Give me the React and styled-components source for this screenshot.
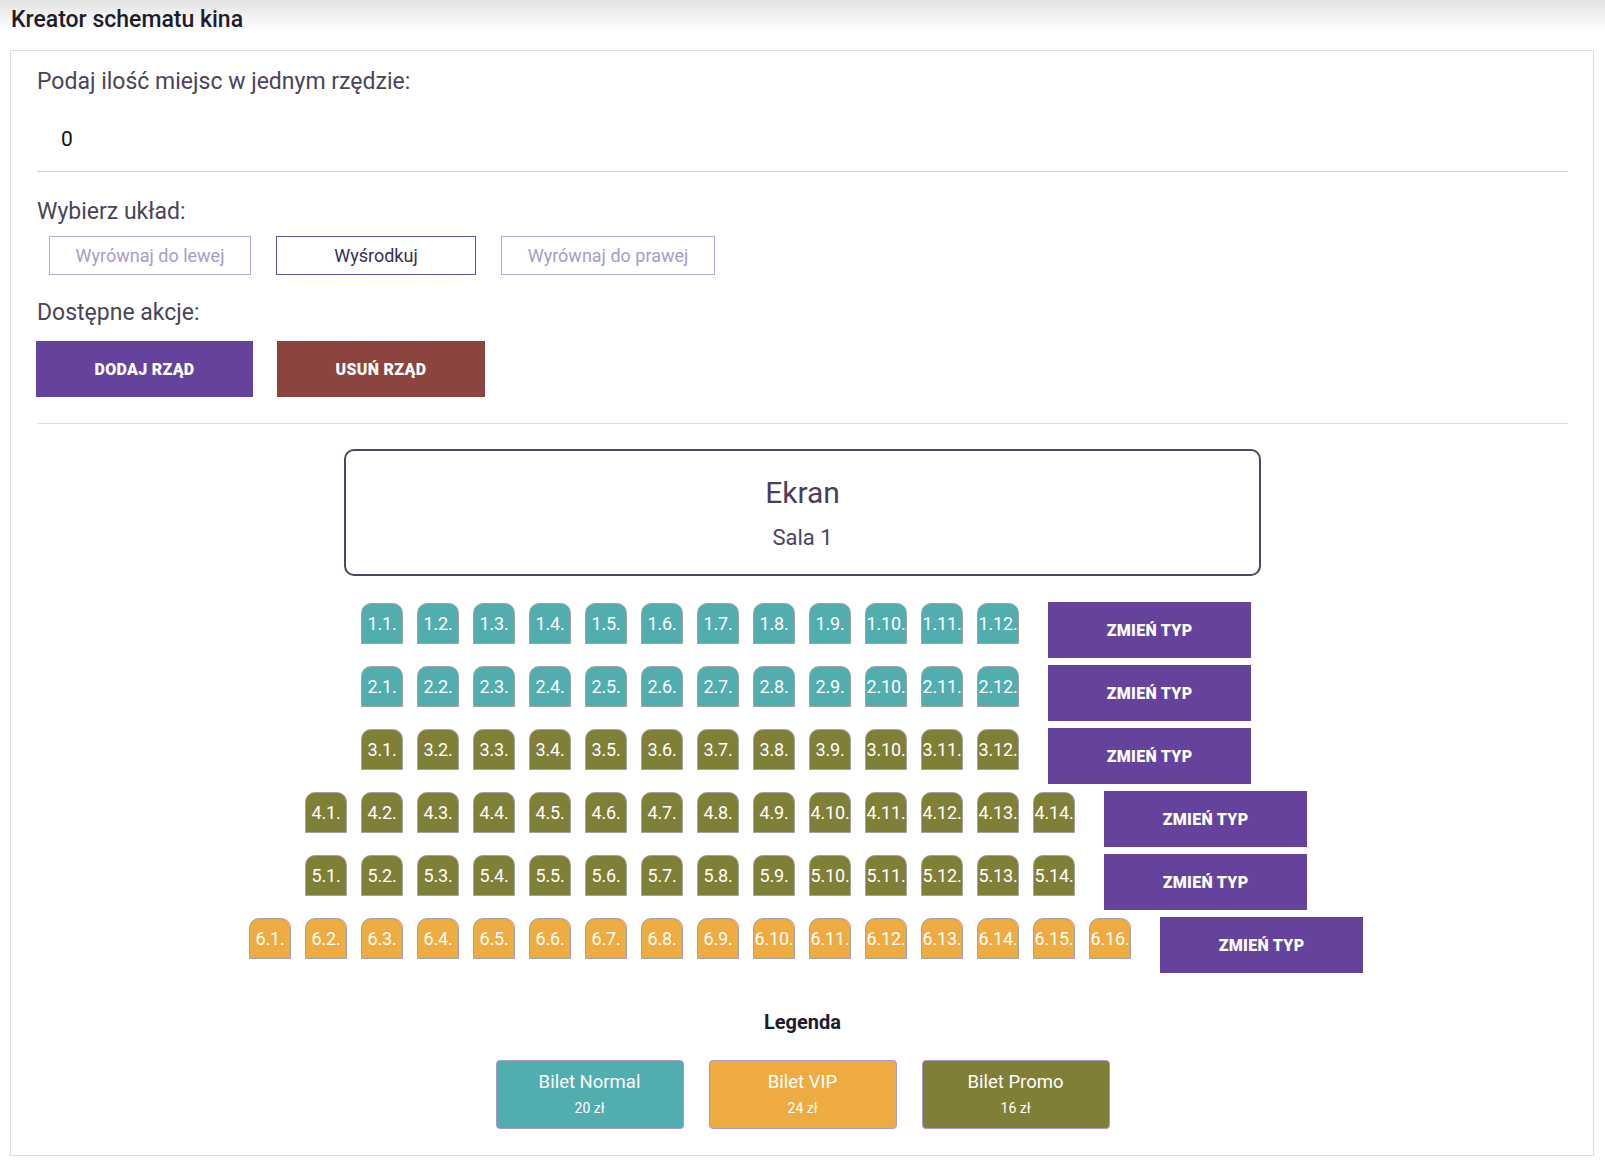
import React from 'react';
import styled, { createGlobalStyle } from 'styled-components';

// ------------------- Styled Components -------------------
const GlobalStyle = createGlobalStyle`
  body {
    margin: 0;
    background: #fff;
    font-family: Roboto, "Liberation Sans", sans-serif;
  }
`;

const Header = styled.header`
  height: 38px;
  display: flex;
  align-items: center;
  padding-left: 11px;
  background: linear-gradient(#e3e3e3 0, #fff 32px);
  font-size: 23px;
  font-weight: 500;
  color: #1e1b2c;
`;

const Panel = styled.section`
  margin: 12px 11px 9px 10px;
  border: 1px solid #dcdcdc;
  padding: 17px 25px 26px 26px;
`;

const Label = styled.div`
  font-size: 23px;
  line-height: 27px;
  color: #4a4458;
  margin-top: ${p => p.$top || 0}px;
`;

const InputRow = styled.div`
  padding: 31px 24px 19px;
  font-size: 21px;
  line-height: 26px;
  color: #111;
  border-bottom: 1px solid #d0d0d0;
`;

const ButtonGroup = styled.div`
  display: flex;
  gap: ${p => p.$gap}px;
  margin: ${p => p.$margin};
`;

const LayoutButton = styled.button`
  width: ${p => p.$w}px;
  height: 39px;
  background: #fff;
  border: 1px solid ${p => (p.$active ? '#6a4fa6' : '#b4a8cf')};
  color: ${p => (p.$active ? '#3b2d57' : '#a99bc6')};
  font-family: Roboto, "Liberation Sans", sans-serif;
  font-size: 18px;
  padding: 0;
  cursor: pointer;
`;

const ActionButton = styled.button`
  width: ${p => p.$w}px;
  height: 56px;
  border: 1px solid ${p => p.$bg};
  background: ${p => p.$bg};
  color: #fff;
  font-family: Roboto, "Liberation Sans", sans-serif;
  font-size: 16px;
  font-weight: 900;
  letter-spacing: 0.3px;
  text-transform: uppercase;
  cursor: pointer;
`;

const Divider = styled.hr`
  border: none;
  border-top: 1px solid #dedede;
  margin: 26px 0 25px;
`;

const Screen = styled.div`
  width: 917px;
  height: 127px;
  box-sizing: border-box;
  margin: 0 auto;
  border: 2px solid #514461;
  border-radius: 10px;
  display: flex;
  flex-direction: column;
  align-items: center;
  justify-content: center;
`;

const ScreenTitle = styled.div`
  font-size: 30px;
  line-height: 36px;
  color: #4a3f5c;
`;

const ScreenSub = styled.div`
  margin-top: 14px;
  font-size: 22px;
  line-height: 26px;
  color: #4a4458;
`;

const Hall = styled.div`
  margin-top: 26px;
  display: flex;
  flex-direction: column;
  align-items: center;
`;

const Row = styled.div`
  display: flex;
  align-items: flex-start;
  margin-bottom: 7.1px;
`;

const Seat = styled.div`
  width: 42px;
  height: 41px;
  box-sizing: border-box;
  margin: 1px 7px 0;
  border: 1px solid #a3a3a3;
  border-radius: 10px 10px 0 0;
  background: ${p => p.$color};
  color: #fff;
  font-size: 18px;
  display: flex;
  align-items: center;
  justify-content: center;
  white-space: nowrap;
  letter-spacing: -0.2px;
`;

const TypeButton = styled.button`
  width: 203px;
  height: 56px;
  margin-left: 22px;
  border: none;
  background: #65439c;
  color: #fff;
  font-family: Roboto, "Liberation Sans", sans-serif;
  font-size: 16px;
  font-weight: 900;
  letter-spacing: 0.3px;
  cursor: pointer;
`;

const LegendTitle = styled.div`
  margin-top: 29px;
  text-align: center;
  font-size: 20px;
  line-height: 24px;
  font-weight: 700;
  color: #1e1b2c;
`;

const Legend = styled.div`
  margin-top: 26px;
  display: flex;
  justify-content: center;
  gap: 25px;
`;

const LegendCard = styled.div`
  width: 188px;
  height: 69px;
  box-sizing: border-box;
  border: 1px solid #a99bc6;
  border-radius: 4px;
  background: ${p => p.$color};
  color: #fff;
  display: flex;
  flex-direction: column;
  align-items: center;
  justify-content: center;
`;

const CardName = styled.div`
  font-size: 18.5px;
  line-height: 22px;
`;

const CardPrice = styled.div`
  margin-top: 6px;
  font-size: 14px;
  line-height: 18px;
`;
// -----------------------------------------------------------

const TYPES = {
  normal: { name: 'Bilet Normal', price: '20 zł', color: '#52adaf' },
  vip: { name: 'Bilet VIP', price: '24 zł', color: '#eeab41' },
  promo: { name: 'Bilet Promo', price: '16 zł', color: '#7f7f37' },
};

const rows = [
  { seats: 12, type: 'normal' },
  { seats: 12, type: 'normal' },
  { seats: 12, type: 'promo' },
  { seats: 14, type: 'promo' },
  { seats: 14, type: 'promo' },
  { seats: 16, type: 'vip' },
];

const App = () => (
  <>
    <GlobalStyle />
    <Header>Kreator schematu kina</Header>
    <Panel>
      <Label>Podaj ilość miejsc w jednym rzędzie:</Label>
      <InputRow>0</InputRow>

      <Label $top={26}>Wybierz układ:</Label>
      <ButtonGroup $gap={25} $margin="11px 0 0 12px">
        <LayoutButton $w={202}>Wyrównaj do lewej</LayoutButton>
        <LayoutButton $w={200} $active>Wyśrodkuj</LayoutButton>
        <LayoutButton $w={214}>Wyrównaj do prawej</LayoutButton>
      </ButtonGroup>

      <Label $top={24}>Dostępne akcje:</Label>
      <ButtonGroup $gap={24} $margin="15px 0 0 -1px">
        <ActionButton $w={217} $bg="#65439c">Dodaj rząd</ActionButton>
        <ActionButton $w={208} $bg="#8b443e">Usuń rząd</ActionButton>
      </ButtonGroup>

      <Divider />

      <Screen>
        <ScreenTitle>Ekran</ScreenTitle>
        <ScreenSub>Sala 1</ScreenSub>
      </Screen>

      <Hall>
        {rows.map((row, r) => (
          <Row key={r}>
            {Array.from({ length: row.seats }, (_, i) => (
              <Seat key={i} $color={TYPES[row.type].color}>
                {r + 1}.{i + 1}.
              </Seat>
            ))}
            <TypeButton>ZMIEŃ TYP</TypeButton>
          </Row>
        ))}
      </Hall>

      <LegendTitle>Legenda</LegendTitle>
      <Legend>
        {Object.keys(TYPES).map(key => (
          <LegendCard key={key} $color={TYPES[key].color}>
            <CardName>{TYPES[key].name}</CardName>
            <CardPrice>{TYPES[key].price}</CardPrice>
          </LegendCard>
        ))}
      </Legend>
    </Panel>
  </>
);

export default App;
